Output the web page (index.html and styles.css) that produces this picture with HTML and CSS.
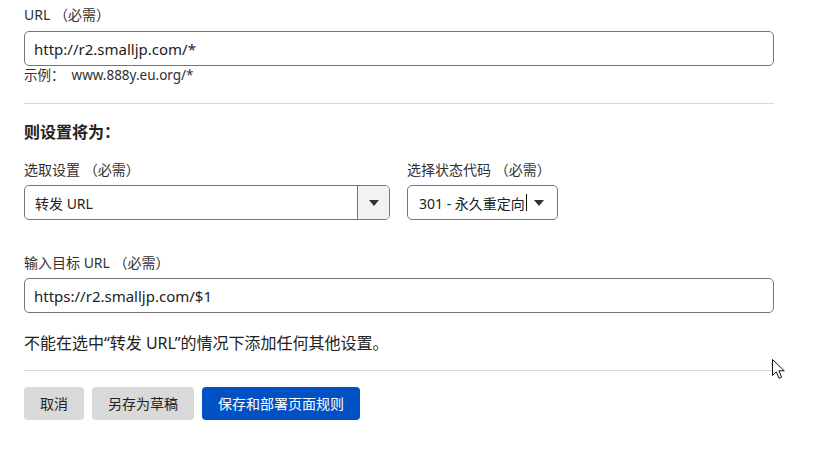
FILE: index.html
```html
<!DOCTYPE html>
<html lang="zh-CN">
<head>
<meta charset="utf-8">
<title>页面规则</title>
<link rel="stylesheet" href="styles.css">
</head>
<body>
<main class="form">
  <div class="field">
    <label class="label">URL （必需）</label>
    <div class="input">http://r2.smalljp.com/*</div>
    <div class="hint">示例：&nbsp;&nbsp;www.888y.eu.org/*</div>
  </div>
  <hr class="divider divider-top">
  <h2 class="heading">则设置将为：</h2>
  <div class="row">
    <div class="field">
      <label class="label">选取设置 （必需）</label>
      <div class="select select-wide">
        <span class="select-value">转发 URL</span>
        <span class="select-toggle"><span class="tri"></span></span>
      </div>
    </div>
    <div class="field">
      <label class="label">选择状态代码 （必需）</label>
      <div class="select select-narrow">
        <span class="select-value">301 - 永久重定向<span class="caret"></span></span>
        <span class="tri"></span>
      </div>
    </div>
  </div>
  <div class="field field-target">
    <label class="label">输入目标 URL （必需）</label>
    <div class="input">https://r2.smalljp.com/$1</div>
  </div>
  <p class="note">不能在选中“转发 URL”的情况下添加任何其他设置。</p>
  <hr class="divider divider-bottom">
  <div class="actions">
    <button class="btn btn-gray">取消</button>
    <button class="btn btn-gray">另存为草稿</button>
    <button class="btn btn-blue">保存和部署页面规则</button>
  </div>
</main>
<svg class="pointer" width="14" height="21" viewBox="0 0 14 21" aria-hidden="true">
  <path d="M0.5 0.5 L0.5 16.5 L4.3 12.8 L7 19.3 L9.6 18.2 L6.9 11.8 L12.3 11.8 Z" fill="#fff" stroke="#111" stroke-width="1" stroke-linejoin="round"/>
</svg>
</body>
</html>
```

FILE: styles.css
```css
* { box-sizing: border-box; }
html, body { margin: 0; padding: 0; background: #fff; }
body {
  font-family: "Noto Sans", "Noto Sans CJK SC", sans-serif;
  color: #313131;
  width: 830px;
  height: 453px;
  overflow: hidden;
  position: relative;
}
.form {
  width: 750px;
  margin-left: 24px;
  padding-top: 6px;
  display: flex;
  flex-direction: column;
}
.field { display: flex; flex-direction: column; }
.label {
  font-size: 14px;
  line-height: 18px;
  height: 18px;
  margin-bottom: 7px;
  color: #313131;
}
.input {
  height: 35px;
  border: 1px solid #767676;
  border-radius: 5px;
  padding: 0 9px;
  display: flex;
  align-items: center;
  font-size: 15px;
  color: #222;
}
.hint {
  font-size: 13.5px;
  line-height: 18px;
  color: #313131;
}
.divider {
  border: 0;
  height: 1px;
  background: #d9d9d9;
  margin: 0;
}
.divider-top { margin-top: 19px; }
.heading {
  margin: 18px 0 0;
  font-size: 16px;
  line-height: 20px;
  font-weight: 700;
  color: #222;
}
.row {
  display: flex;
  gap: 17px;
  margin-top: 19px;
}
.row .label { margin-bottom: 6px; }
.select {
  height: 35px;
  border: 1px solid #767676;
  border-radius: 5px;
  display: flex;
  align-items: center;
  font-size: 14px;
  color: #222;
}
.select-wide { width: 366px; }
.select-narrow { width: 151px; padding: 0 13px 0 11px; justify-content: space-between; }
.select-wide .select-value { flex: 1; padding-left: 10px; }
.select-toggle {
  width: 32px;
  align-self: stretch;
  border-left: 1px solid #767676;
  background: #f2f2f2;
  border-radius: 0 4px 4px 0;
  display: flex;
  align-items: center;
  justify-content: center;
}
.tri {
  width: 0;
  height: 0;
  border-left: 5px solid transparent;
  border-right: 5px solid transparent;
  border-top: 6px solid #333;
}
.select-value { display: inline-flex; align-items: center; }
.caret {
  display: inline-block;
  width: 1px;
  height: 17px;
  background: #111;
  margin-left: 1px;
}
.field-target { margin-top: 34px; }
.field-target .label { margin-bottom: 6px; }
.note {
  margin: 19px 0 0;
  font-size: 16px;
  line-height: 22px;
  color: #222;
}
.divider-bottom { margin-top: 16px; }
.actions {
  display: flex;
  gap: 8px;
  margin-top: 16px;
}
.btn {
  height: 33px;
  border: 0;
  border-radius: 4px;
  padding: 0 16px;
  font-family: inherit;
  font-size: 14px;
  line-height: 33px;
}
.btn-gray { background: #d9d9d9; color: #222; }
.btn-blue { background: #0051c3; color: #fff; }
.pointer {
  position: absolute;
  left: 772px;
  top: 359px;
}
```
